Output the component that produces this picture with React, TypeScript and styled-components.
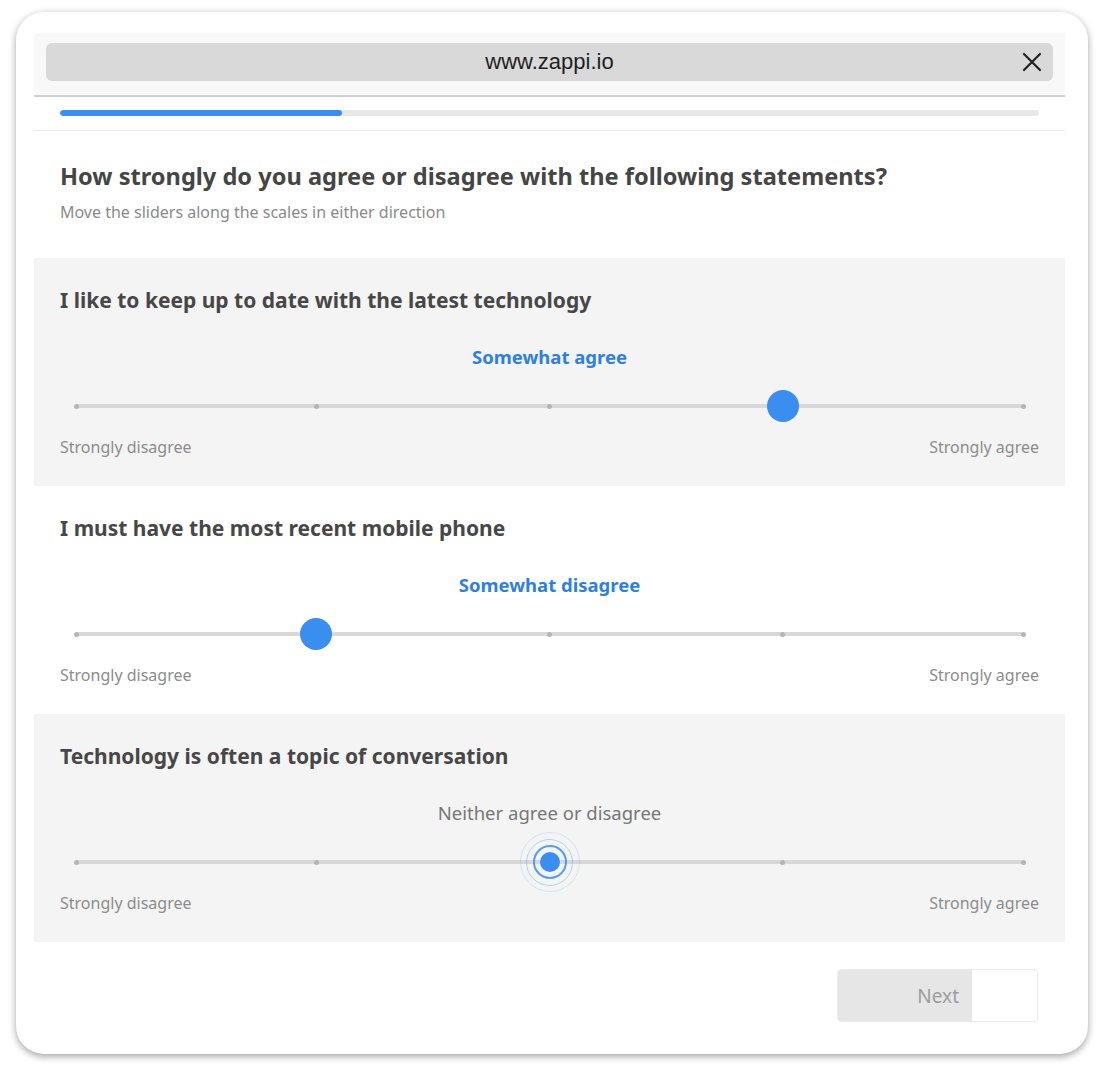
import React from "react";
import styled, { createGlobalStyle } from "styled-components";

const Global = createGlobalStyle`
  html, body { margin: 0; padding: 0; background: #ffffff; }
  body { font-family: "Noto Sans", "Open Sans", sans-serif; }
  * { box-sizing: border-box; }
`;

const Page = styled.div`
  width: 1104px;
  height: 1074px;
  padding: 12px 16px 0 16px;
`;

const Card = styled.div`
  width: 1072px;
  height: 1042px;
  background: #fff;
  border-radius: 28px;
  box-shadow: 0 3px 7px rgba(0, 0, 0, 0.3), 0 0 10px rgba(0, 0, 0, 0.08);
  padding: 21px 23px 0 18px;
  display: flex;
  flex-direction: column;
`;

const Browser = styled.div`
  background: #f8f8f8;
  padding: 10px 12px 14px 12px;
  border-bottom: 2px solid #cfcfcf;
`;

const Address = styled.div`
  height: 38px;
  border-radius: 6px;
  background: #d9d9d9;
  display: flex;
  align-items: center;
  justify-content: center;
  position: relative;
  font-family: "Liberation Sans", Arial, sans-serif;
  font-size: 22px;
  color: #1f1f1f;
`;

const Close = styled.svg`
  position: absolute;
  right: 11px;
  top: 9px;
`;

const ProgressWrap = styled.div`
  padding: 13px 26px 14px 26px;
  border-bottom: 1px solid #ececec;
`;

const Track = styled.div`
  height: 6px;
  border-radius: 3px;
  background: #e8e8e8;
  overflow: hidden;
`;

const Fill = styled.div`
  height: 100%;
  border-radius: 3px;
  background: #3a8eef;
`;

const Header = styled.div`
  padding: 30px 26px 35px 26px;
`;

const Title = styled.h1`
  margin: 0;
  font-size: 23.6px;
  line-height: 30px;
  font-weight: 700;
  color: #454545;
`;

const Sub = styled.p`
  margin: 10px 0 0 0;
  font-size: 16px;
  line-height: 22px;
  color: #8a8a8a;
`;

const Panel = styled.section<{ $shade: boolean }>`
  background: ${(p) => (p.$shade ? "#f4f4f4" : "#ffffff")};
  padding: 30px 26px 28px 26px;
  height: 228px;
  display: flex;
  flex-direction: column;
`;

const Question = styled.h2`
  margin: 0;
  font-size: 21px;
  line-height: 24px;
  font-weight: 700;
  color: #474747;
`;

const Value = styled.div<{ $active: boolean }>`
  margin-top: 33px;
  text-align: center;
  font-size: 18.5px;
  line-height: 24px;
  font-weight: ${(p) => (p.$active ? 700 : 400)};
  color: ${(p) => (p.$active ? "#2f7fe0" : "#777777")};
`;

const SliderArea = styled.div`
  margin: 21px 16px 0 16px;
  height: 32px;
  position: relative;
`;

const Rail = styled.div`
  position: absolute;
  left: 0;
  right: 0;
  top: 14px;
  height: 4px;
  border-radius: 2px;
  background: #d8d8d8;
`;

const Dot = styled.span`
  position: absolute;
  top: 14px;
  width: 5px;
  height: 5px;
  margin-left: -2.5px;
  margin-top: -0.5px;
  border-radius: 50%;
  background: #b5b5b5;
`;

const Thumb = styled.span`
  position: absolute;
  top: 0;
  width: 32px;
  height: 32px;
  margin-left: -16px;
  border-radius: 50%;
  background: #3a8eef;
`;

const Pulse = styled.span`
  position: absolute;
  top: 16px;
  width: 0;
  height: 0;
`;

const Ring = styled.span<{ $size: number; $alpha: number; $w: number }>`
  position: absolute;
  left: ${(p) => -p.$size / 2}px;
  top: ${(p) => -p.$size / 2}px;
  width: ${(p) => p.$size}px;
  height: ${(p) => p.$size}px;
  border-radius: 50%;
  border: ${(p) => p.$w}px solid rgba(58, 142, 239, ${(p) => p.$alpha});
`;

const Core = styled.span`
  position: absolute;
  left: -10px;
  top: -10px;
  width: 20px;
  height: 20px;
  border-radius: 50%;
  background: #3a8eef;
`;

const Ends = styled.div`
  margin-top: 14px;
  display: flex;
  justify-content: space-between;
  font-size: 16px;
  line-height: 22px;
  color: #8c8c8c;
`;

const Footer = styled.div`
  display: flex;
  justify-content: flex-end;
  padding: 27px 27px 0 0;
`;

const NextButton = styled.button`
  width: 201px;
  height: 53px;
  border: 1px solid #ececec;
  border-radius: 4px;
  padding: 0;
  display: flex;
  overflow: hidden;
  background: #fff;
  font-family: "Noto Sans", "Open Sans", sans-serif;
`;

const NextLabel = styled.span`
  width: 134px;
  height: 100%;
  background: #e6e6e6;
  display: flex;
  align-items: center;
  justify-content: flex-end;
  padding-right: 13px;
  font-size: 19px;
  color: #9c9c9c;
`;

const stops = [0, 240, 473, 706, 946];

type Q = { text: string; value: string; index: number; active: boolean; focus?: boolean };

const questions: Q[] = [
  { text: "I like to keep up to date with the latest technology", value: "Somewhat agree", index: 3, active: true },
  { text: "I must have the most recent mobile phone", value: "Somewhat disagree", index: 1, active: true },
  { text: "Technology is often a topic of conversation", value: "Neither agree or disagree", index: 2, active: false, focus: true },
];

function Slider({ q }: { q: Q }) {
  const pct = (x: number) => `${(x / 946) * 100}%`;
  return (
    <SliderArea>
      <Rail />
      {stops.map((s) => (
        <Dot key={s} style={{ left: pct(s) }} />
      ))}
      {q.focus ? (
        <Pulse style={{ left: pct(stops[q.index]) }}>
          <Ring $size={60} $alpha={0.18} $w={1.5} />
          <Ring $size={47} $alpha={0.35} $w={1.5} />
          <Ring $size={34} $alpha={0.85} $w={2} />
          <Core />
        </Pulse>
      ) : (
        <Thumb style={{ left: pct(stops[q.index]) }} />
      )}
    </SliderArea>
  );
}

export default function App() {
  return (
    <>
      <Global />
      <Page>
        <Card>
          <Browser>
            <Address>
              www.zappi.io
              <Close width="20" height="20" viewBox="0 0 20 20">
                <path d="M2 2 L18 18 M18 2 L2 18" stroke="#222" strokeWidth="2.2" strokeLinecap="round" />
              </Close>
            </Address>
          </Browser>
          <ProgressWrap>
            <Track>
              <Fill style={{ width: `${(282 / 978) * 100}%` }} />
            </Track>
          </ProgressWrap>
          <Header>
            <Title>How strongly do you agree or disagree with the following statements?</Title>
            <Sub>Move the sliders along the scales in either direction</Sub>
          </Header>
          {questions.map((q, i) => (
            <Panel key={q.text} $shade={i % 2 === 0}>
              <Question>{q.text}</Question>
              <Value $active={q.active}>{q.value}</Value>
              <Slider q={q} />
              <Ends>
                <span>Strongly disagree</span>
                <span>Strongly agree</span>
              </Ends>
            </Panel>
          ))}
          <Footer>
            <NextButton>
              <NextLabel>Next</NextLabel>
            </NextButton>
          </Footer>
        </Card>
      </Page>
    </>
  );
}
